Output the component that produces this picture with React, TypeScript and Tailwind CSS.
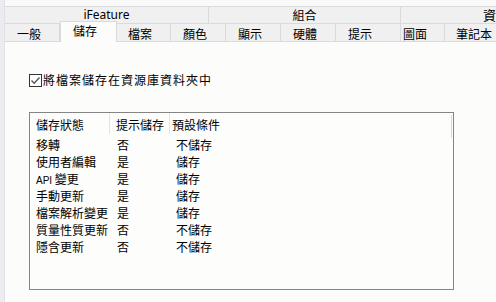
import React from "react";

const cjk = { fontFamily: '"Noto Sans CJK TC", "Noto Sans", sans-serif' };

const tabs: { label: string; w: string; pl: string; sel?: boolean }[] = [
  { label: "一般", w: "w-[55px]", pl: "pl-[12px]" },
  { label: "儲存", w: "w-[57px]", pl: "pl-[12px]", sel: true },
  { label: "檔案", w: "w-[54px]", pl: "pl-[11px]" },
  { label: "顏色", w: "w-[55px]", pl: "pl-[12px]" },
  { label: "顯示", w: "w-[55px]", pl: "pl-[12px]" },
  { label: "硬體", w: "w-[55px]", pl: "pl-[12px]" },
  { label: "提示", w: "w-[65px]", pl: "pl-[12px]" },
  { label: "圖面", w: "w-[44px]", pl: "pl-[2px]" },
  { label: "筆記本", w: "w-[80px]", pl: "pl-[11px]" },
];

const rows: [string, string, string][] = [
  ["移轉", "否", "不儲存"],
  ["使用者編輯", "是", "儲存"],
  ["API 變更", "是", "儲存"],
  ["手動更新", "是", "儲存"],
  ["檔案解析變更", "是", "儲存"],
  ["質量性質更新", "否", "不儲存"],
  ["隱含更新", "否", "不儲存"],
];

export default function App() {
  return (
    <div
      className="w-[496px] h-[302px] overflow-hidden flex bg-[#f0f0f0] text-black text-[12px]"
      style={cjk}
    >
      <div className="w-[5px] shrink-0 bg-[#ececf0] border-r border-[#e2e2e6]" />
      <div className="flex-1 flex flex-col min-w-0">
        <div className="h-[6px] shrink-0 bg-[#f9f9f9]" />
        {/* group row */}
        <div className="h-[18px] shrink-0 flex border-t border-b border-[#dadada] bg-[#f0f0f0] leading-[16px]">
          <div
            className="w-[204px] shrink-0 border-r border-[#dadada] text-center text-[12px]"
            style={{ fontFamily: '"Noto Sans", "Liberation Sans", sans-serif' }}
          >
            iFeature
          </div>
          <div className="w-[192px] shrink-0 border-r border-[#dadada] text-center">組合</div>
          <div className="w-[200px] shrink-0 pl-[82px] text-[13px] whitespace-nowrap">資源庫</div>
        </div>
        {/* tab row */}
        <div className="h-[18px] shrink-0 flex border-b border-[#dadada] bg-[#f0f0f0] leading-[17px]">
          {tabs.map((t) =>
            t.sel ? (
              <div
                key={t.label}
                className={`${t.w} ${t.pl} shrink-0 h-[21px] -mt-[3px] bg-[#fcfcfb] border-l border-r border-t border-[#dadada] relative z-10 leading-[18px]`}
              >
                {t.label}
              </div>
            ) : (
              <div
                key={t.label}
                className={`${t.w} ${t.pl} shrink-0 border-r border-[#dadada] pt-[1px]`}
              >
                {t.label}
              </div>
            )
          )}
        </div>
        {/* content */}
        <div className="flex-1 bg-[#fcfcfb] pl-[24px] pt-[31px]">
          <div className="flex items-center h-[14px]">
            <div className="w-[13px] h-[13px] border border-[#333] bg-white flex items-center justify-center">
              <svg width="11" height="11" viewBox="0 0 11 11">
                <path d="M1.5 5.5 L4.2 8.2 L9.5 2.5" fill="none" stroke="#555" strokeWidth="1.4" />
              </svg>
            </div>
            <span className="ml-[1px] text-[12px] tracking-[1px] leading-[14px] whitespace-nowrap">將檔案儲存在資源庫資料夾中</span>
          </div>
          <div className="mt-[25px] w-[425px] h-[178px] border border-[#858585] bg-[#fdfdfc] relative">
            <div className="absolute right-[1px] top-[2px] w-[1px] h-[23px] bg-[#d8d8dc]" />
            <div className="grid grid-cols-[80px_60px_1fr] h-[23px]">
              <div className="pl-[6px] border-r border-[#e3e3e3] h-[19px] leading-[19px] pt-[2px] box-content">儲存狀態</div>
              <div className="pl-[6px] border-r border-[#e3e3e3] h-[19px] leading-[19px] pt-[2px] box-content">提示儲存</div>
              <div className="pl-[2px] h-[19px] leading-[19px] pt-[2px] box-content">預設條件</div>
            </div>
            {rows.map((r) => (
              <div key={r[0]} className="grid grid-cols-[80px_60px_1fr] h-[17px] leading-[17px]">
                <div className="pl-[6px] whitespace-nowrap">
                  {r[0].startsWith("API") ? (
                    <>
                      <span className="text-[10px]" style={{ fontFamily: '"Liberation Sans", sans-serif' }}>API</span> 變更
                    </>
                  ) : (
                    r[0]
                  )}
                </div>
                <div className="pl-[7px]">{r[1]}</div>
                <div className="pl-[6px]">{r[2]}</div>
              </div>
            ))}
          </div>
        </div>
      </div>
    </div>
  );
}
